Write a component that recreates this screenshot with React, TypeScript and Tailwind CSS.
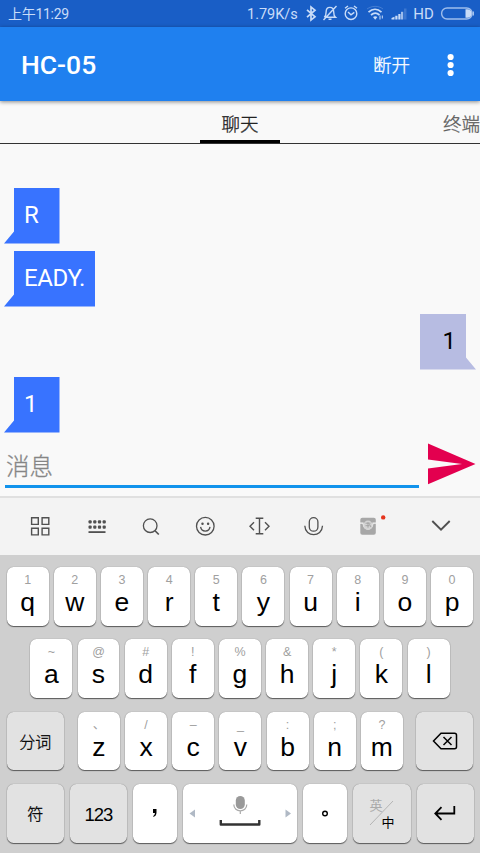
import React from "react";

const latin = "font-['Liberation_Sans','Noto_Sans_CJK_SC',sans-serif]";
const roboto = "font-[Roboto,'Noto_Sans_CJK_SC',sans-serif]";
const cjk = "font-light [-webkit-text-stroke:0.3px_currentColor]";

function StatusBar() {
  return (
    <div className={`flex h-[27px] items-center bg-[#195ec6] text-[#c9dcf8] ${roboto}`}>
      <div className="ml-2 w-[239px] whitespace-nowrap pt-px text-[14px] leading-[27px] tracking-[-0.300px]">上午11:29</div>
      <div className="w-[58px] whitespace-nowrap pt-px text-[14.500px] leading-[27px]">1.79K/s</div>
      <svg className="h-[27px] w-[175px] shrink-0" viewBox="305 0 175 27" fill="none" stroke="currentColor" strokeWidth="1.400">
        <path d="M307 9.800l8 7-4 3.200v-13l4 3.200-8 7" strokeWidth="1.700" />
        <path d="M325 17.300h10.500c-1.600-1.400-1.800-2.600-1.800-5.400 0-3-1.400-4.500-3.800-4.500s-3.800 1.500-3.800 4.500c0 2.800-.2 4-1.800 5.400M328.500 19.300h3M336.500 6L323.500 20" />
        <circle cx="351" cy="13.700" r="5.800" />
        <path d="M348 12l3 2.800 3.300-2.400M345 8.300l3-2.300M357 8.300l-3-2.300" />
        <path d="M368.500 12.200c4-3.700 9-3.700 13 0M371 15c2.800-2.400 5.700-2.400 8.500 0" strokeWidth="1.700" />
        <path d="M367 9c5-3.500 11.500-3.500 16 0" opacity=".25" strokeWidth="1" />
        <path d="M373 17q2.200-1.700 4.400 0l-2.200 2.700z" fill="currentColor" stroke="none" />
        <path d="M380 15.500v4M382.300 15.500v3" strokeWidth="1" />
        <g fill="currentColor" stroke="none">
          <path d="M391.500 18l3-1.300v2.800h-3zM395.300 15.800h2.200v3.700h-2.200zM398.300 14h2.200v5.500h-2.200z" />
          <path d="M401 11.800h2.200v7.700H401z" opacity=".75" />
          <path d="M404 8.500h2.500v11H404z" opacity=".2" />
        </g>
        <text x="413.300" y="19" fill="currentColor" stroke="none" fontFamily="Roboto, sans-serif" fontSize="15">HD</text>
        <rect x="441.600" y="8" width="30.500" height="11" rx="5.500" opacity=".75" />
        <path d="M465.500 9.300h2a4.200 4.200 0 0 1 0 8.400h-2z" fill="currentColor" stroke="none" />
        <path d="M473.300 11.500v4" strokeWidth="1" />
      </svg>
    </div>
  );
}

function AppBar() {
  return (
    <header className={`relative flex h-[74px] items-center bg-[#1f80ef] text-white shadow-[0_1px_4px_rgba(0,0,0,0.45)] ${roboto}`}>
      <h1 className="ml-[21px] w-[352px] pt-[2px] text-[26.500px] font-medium leading-[32px]">HC-05</h1>
      <span className={`w-[67px] pt-[3px] text-[18.500px] leading-[24px] ${cjk}`}>断开</span>
      <svg className="mt-[1px] h-[24px] w-[22px]" viewBox="0 0 22 24" fill="currentColor">
        <circle cx="10.600" cy="4" r="3.100" />
        <circle cx="10.600" cy="12" r="3.100" />
        <circle cx="10.600" cy="20" r="3.100" />
      </svg>
    </header>
  );
}

function Tabs() {
  return (
    <nav className={`flex h-[43px] shrink-0 overflow-hidden border-b border-[#333] pl-[200px] text-[18.500px] ${cjk} ${roboto}`}>
      <div className="h-[42px] w-20 shrink-0 border-b-[3px] border-black pt-[11px] text-center leading-[27px] text-[#222]">聊天</div>
      <div className="ml-[163px] whitespace-nowrap pt-[11px] leading-[27px] text-[#5c5c5c]">终端</div>
    </nav>
  );
}

function Incoming({ text }: { text: string }) {
  return (
    <div className="flex h-[56px] min-w-[55.500px] self-start bg-[#3873ff] pl-[20px] pr-[10px] [clip-path:polygon(10px_0,100%_0,100%_100%,0_100%,10px_44px)]">
      <span className="text-[24px] leading-[54px] tracking-[-0.350px] text-white">{text}</span>
    </div>
  );
}

function Chat() {
  return (
    <main className={`flex h-[289px] flex-col gap-[7px] pl-1 pr-[4px] pt-[43.500px] ${roboto}`}>
      <Incoming text="R" />
      <Incoming text="EADY." />
      <div className="flex h-[56px] w-[56px] justify-end self-end bg-[#b7bce2] pr-[20px] [clip-path:polygon(0_0,46px_0,46px_44px,100%_100%,0_100%)]">
        <span className="text-[24px] leading-[54px] text-black">1</span>
      </div>
      <Incoming text="1" />
    </main>
  );
}

function Composer() {
  return (
    <div className={`flex h-[63px] pl-[5px] ${roboto}`}>
      <div className={`h-[54.500px] w-[414px] border-b-[3px] border-[#1293ec] pl-px text-[23.500px] leading-[69px] text-[#858585] ${cjk}`}>消息</div>
      <svg className="ml-[9px] mt-[10px] h-[42px] w-[48px]" viewBox="0 0 48 42">
        <path d="M0 .6L47.500 21 0 41.300V25.500L34 21 0 16.500z" fill="#e3004f" />
      </svg>
    </div>
  );
}

const cell = "h-[58px] w-[54.500px]";

function Toolbar() {
  return (
    <div className="flex h-[59px] border-t-2 border-[#e0e0e0] bg-[#f3f3f3] pl-[13px] text-[#505050]">
      <svg className={cell} viewBox="13.200 497.800 54.500 58" fill="none" stroke="currentColor" strokeWidth="1.400">
        <path d="M31.800 517.500h6.700v6.700h-6.700zM42.300 517.500h6.700v6.700h-6.700zM31.800 528h6.700v6.700h-6.700zM42.300 528h6.700v6.700h-6.700z" />
      </svg>
      <svg className={cell} viewBox="68 497.800 54.500 58" fill="currentColor">
        {[88.5, 93.2, 97.9, 102.6].map((x) => (
          <g key={x}>
            <rect x={x} y="520" width="3.200" height="3.200" rx="1" />
            <rect x={x} y="525.300" width="3.200" height="3.200" rx="1" />
          </g>
        ))}
        <rect x="88.500" y="531" width="17" height="1.800" />
      </svg>
      <svg className={cell} viewBox="122 497.800 54.500 58" fill="none" stroke="currentColor" strokeWidth="1.300">
        <circle cx="150.200" cy="525.500" r="6.800" />
        <path d="M154.800 530.300l4 4" strokeWidth="1.700" />
      </svg>
      <svg className={cell} viewBox="177 497.800 54.500 58" fill="none" stroke="currentColor" strokeWidth="1.300">
        <circle cx="205.300" cy="526" r="8.800" />
        <path d="M200.600 526.700c.8 5.500 8.600 5.500 9.400 0" />
        <circle cx="202.500" cy="523.500" r=".6" fill="currentColor" />
        <circle cx="208.100" cy="523.500" r=".6" fill="currentColor" />
      </svg>
      <svg className={cell} viewBox="231 497.800 54.500 58" fill="none" stroke="currentColor" strokeWidth="1.400">
        <path d="M255.700 518h7.600M255.700 533.500h7.600M259.500 518v15.500M254 522l-4 4 4 4M265 522l4 4-4 4" />
      </svg>
      <svg className={cell} viewBox="286 497.800 54.500 58" fill="none" stroke="currentColor" strokeWidth="1.300">
        <rect x="309.300" y="517.500" width="8.600" height="13.500" rx="4.300" />
        <path d="M304.800 525.500c.5 12 17.200 12 17.700 0" />
      </svg>
      <svg className={cell} viewBox="340 497.800 54.500 58">
        <rect x="360.300" y="517.500" width="15.500" height="17" rx="2" fill="#a7a7a7" />
        <path d="M360 523h3c1 8 9 8 10 0h3" fill="none" stroke="#f3f3f3" strokeWidth="1.200" />
        <circle cx="368" cy="525" r="4.600" fill="#d4d4d4" />
        <path d="M365.500 523h5M365.500 525.500h4M368 522v5.500M369.500 524l1.500 3" fill="none" stroke="#999" strokeWidth=".8" />
        <circle cx="383.200" cy="517.200" r="2.200" fill="#e5341d" />
      </svg>
      <svg className="ml-[18px] h-[58px] w-[60px] shrink-0" viewBox="412.500 498 60 58" fill="none" stroke="currentColor" strokeWidth="1.900">
        <path d="M431.800 521l8.700 8.700 8.700-8.700" />
      </svg>
    </div>
  );
}

const keyBase = "h-[58.500px] shrink-0 rounded-[6.500px] shadow-[0_1px_1px_rgba(0,0,0,0.55),0_0_1px_rgba(0,0,0,0.4)]";

function Letter({ hint, label }: { hint: string; label: string }) {
  return (
    <div className={`${keyBase} w-[41.900px] bg-white text-center`}>
      <div className="h-[25px] pt-[6px] text-[12.500px] leading-[15px] text-[#a0a0a0]">{hint}</div>
      <div className="text-[26.500px] leading-[20px] text-black">{label}</div>
    </div>
  );
}

function Key({ width, light, children }: { width: string; light?: boolean; children: React.ReactNode }) {
  return (
    <div className={`${keyBase} ${width} ${light ? "bg-white" : "bg-[#e2e2e2]"} flex items-center justify-center text-black`}>
      {children}
    </div>
  );
}

const letters = (keys: string, hints: string) =>
  keys.split("").map((label, i) => <Letter key={label} label={label} hint={hints[i]} />);

function Keyboard() {
  return (
    <div className={`flex h-[298px] flex-col gap-[13.900px] bg-[#cfcfcf] pl-[6.700px] pt-[12px] ${latin}`}>
      <div className="flex gap-[5.270px]">{letters("qwertyuiop", "1234567890")}</div>
      <div className="flex gap-[5.270px] pl-[23.700px]">{letters("asdfghjkl", "~@#!%&*()")}</div>
      <div className="flex">
        <Key width="w-[57px]"><span className={`pt-[3px] text-[16px] ${cjk}`}>分词</span></Key>
        <div className="ml-[14.300px] mr-[13.300px] flex gap-[5.270px]">{letters("zxcvbnm", "、/–_:;?")}</div>
        <Key width="w-[57px]">
          <svg className="h-[18px] w-[26px]" viewBox="0 0 26 18" fill="none" stroke="currentColor" strokeWidth="1.500">
            <path d="M1.500 9l7.500-7.800h13.500q2 0 2 2v11.600q0 2-2 2H9zM11.500 5l8 8M19.500 5l-8 8" />
          </svg>
        </Key>
      </div>
      <div className="flex">
        <Key width="w-[57px]"><span className={`pt-[3px] text-[16px] ${cjk}`}>符</span></Key>
        <span className="w-[6px]" />
        <Key width="w-[57.300px]"><span className="pt-[2px] text-[18.500px] tracking-[-1px]">123</span></Key>
        <span className="w-[5.700px]" />
        <Key width="w-[44.800px]" light>
          <svg className="h-[12px] w-[8px]" viewBox="0 0 8 12"><path d="M2 2h3.500v3.500Q5.500 9 2.300 10v-1q1.500-.8 1.700-3H2z" fill="currentColor" /></svg>
        </Key>
        <span className="w-[5.700px]" />
        <Key width="w-[113.500px]" light>
          <svg className="h-[58px] w-[113px]" viewBox="183 784 113 58">
            <path d="M195 809.500v8l-5.500-4zM285.500 809.500v8l5.500-4z" fill="#b0b9c5" />
            <rect x="235.800" y="796" width="9" height="13" rx="4.500" fill="#999" />
            <path d="M233.800 804.500c0 8.500 13 8.500 13 0M240.300 811v3" fill="none" stroke="#aaa" strokeWidth="1.200" />
            <path d="M220.800 820v4.500h38.500V820" fill="none" stroke="#333" strokeWidth="2.400" strokeLinejoin="round" />
          </svg>
        </Key>
        <span className="w-[5.900px]" />
        <Key width="w-[44.800px]" light>
          <svg className="h-[8px] w-[8px]" viewBox="0 0 8 8"><circle cx="4" cy="4.500" r="2.300" fill="none" stroke="currentColor" strokeWidth="1.400" /></svg>
        </Key>
        <span className="w-[6px]" />
        <Key width="w-[57.300px]">
          <div className="relative h-[58px] w-[57px]">
            <span className="absolute left-[16px] top-[13px] text-[13px] leading-[18px] text-[#aaa]">英</span>
            <svg className="absolute left-[16px] top-[16px] h-[26px] w-[26px]" viewBox="0 0 26 26"><path d="M1 25L24 1" stroke="#b5b5b5" /></svg>
            <span className="absolute left-[28px] top-[30px] text-[13px] leading-[18px] text-black">中</span>
          </div>
        </Key>
        <span className="w-[5.900px]" />
        <Key width="w-[57px]">
          <svg className="h-[16px] w-[22px]" viewBox="0 0 22 16" fill="none" stroke="currentColor" strokeWidth="1.800">
            <path d="M20.300 1v7.500H1.500M7.500 2.200L1.300 8.500l6.200 6.300" />
          </svg>
        </Key>
      </div>
    </div>
  );
}

export default function App() {
  return (
    <div className="flex h-[853px] w-[480px] flex-col overflow-hidden bg-[#f9f9f9]">
      <StatusBar />
      <AppBar />
      <Tabs />
      <Chat />
      <Composer />
      <Toolbar />
      <Keyboard />
    </div>
  );
}
